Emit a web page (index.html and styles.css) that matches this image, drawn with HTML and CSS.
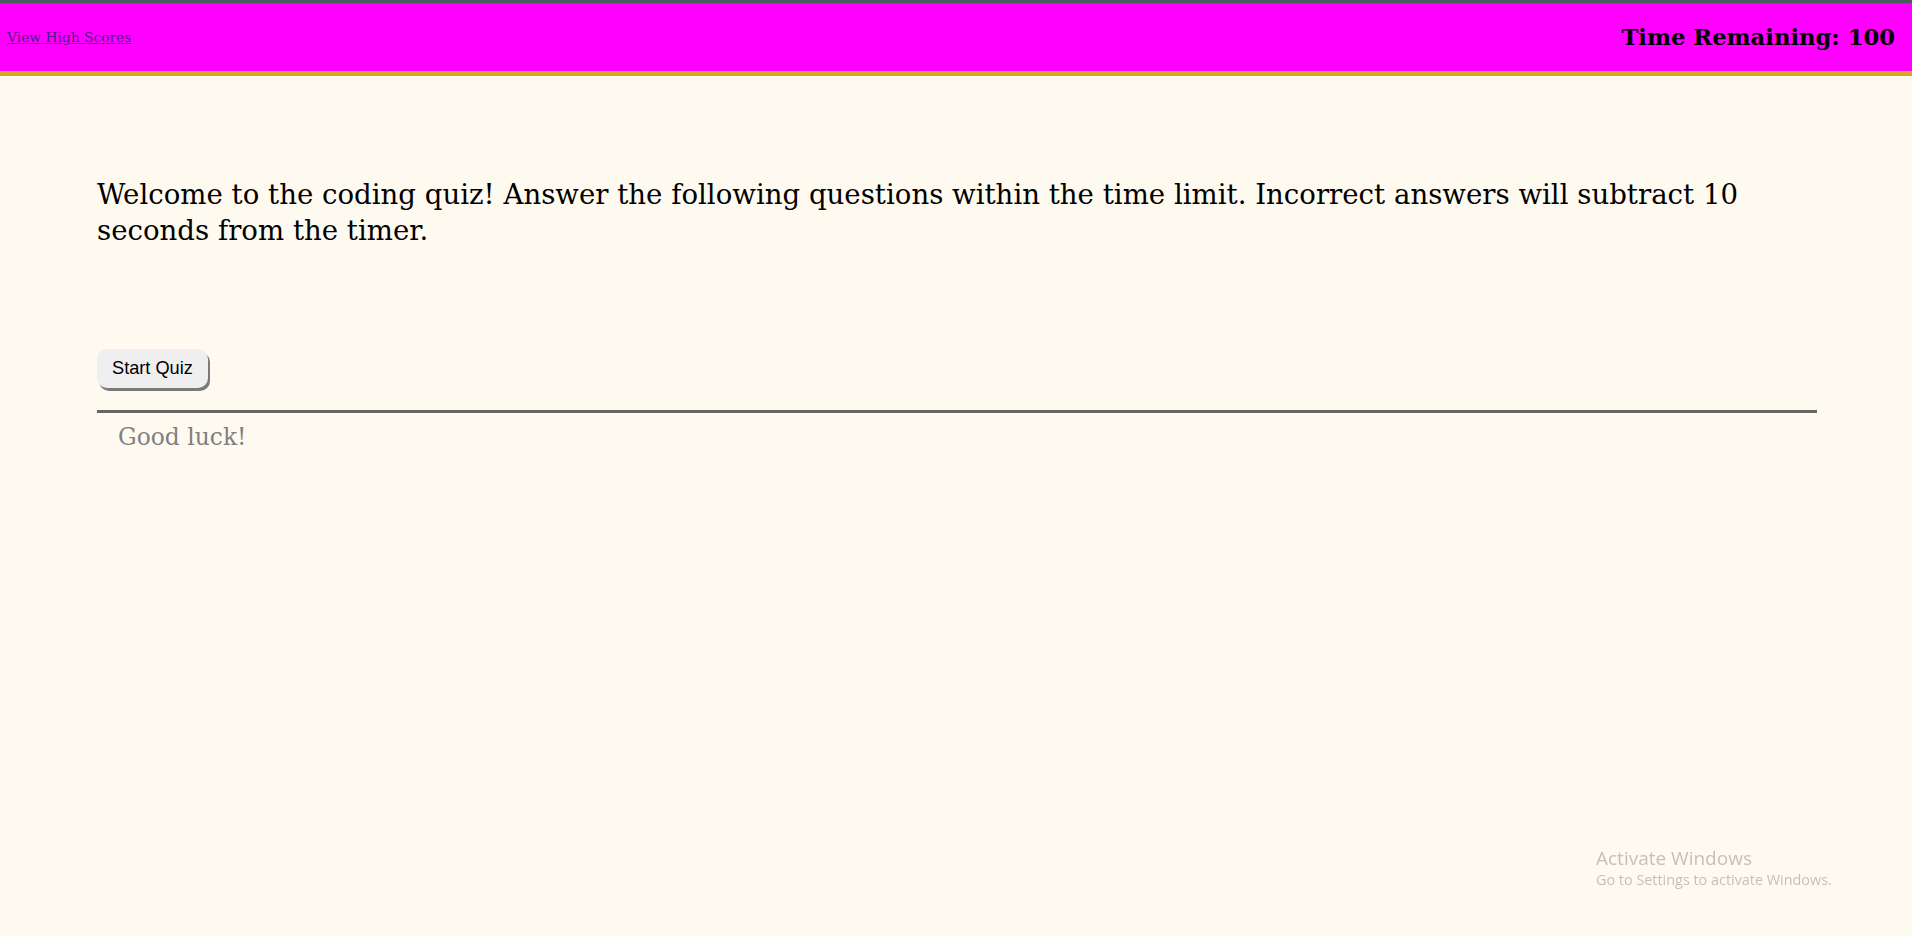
FILE: index.html
```html
<!DOCTYPE html>
<html lang="en">
<head>
<meta charset="utf-8">
<title>Coding Quiz</title>
<link rel="stylesheet" href="styles.css">
</head>
<body>
<header class="topbar">
  <a class="scores-link" href="#">View High Scores</a>
  <div class="timer">Time Remaining: 100</div>
</header>
<main class="quiz">
  <p class="intro">Welcome to the coding quiz! Answer the following questions within the time limit. Incorrect answers will subtract 10 seconds from the timer.</p>
  <div class="actions">
    <button class="start-btn" type="button">Start Quiz</button>
  </div>
  <hr class="divider">
  <p class="feedback">Good luck!</p>
</main>
<div class="watermark">
  <div class="wm-title">Activate Windows</div>
  <div class="wm-sub">Go to Settings to activate Windows.</div>
</div>
</body>
</html>
```
FILE: styles.css
```css
html, body {
  margin: 0;
  padding: 0;
}
body {
  background: #fffaf0;
  font-family: "DejaVu Serif", Georgia, serif;
  color: #000;
  min-height: 936px;
}
.topbar {
  display: flex;
  justify-content: space-between;
  align-items: center;
  height: 68px;
  background: #ff00ff;
  border-top: 3px solid #4b5a5c;
  border-bottom: 5px solid #daa520;
  padding: 0 17px 0 7px;
}
.scores-link {
  font-size: 13.8px;
  color: #551a8b;
  text-decoration: underline;
}
.timer {
  font-size: 22.7px;
  font-weight: bold;
}
.quiz {
  padding: 0 95px 0 97px;
}
.intro {
  margin: 101px 0 0 0;
  font-size: 27.6px;
  line-height: 36px;
}
.actions {
  display: flex;
  margin-top: 100px;
}
.start-btn {
  font-family: "Liberation Sans", Arial, sans-serif;
  font-size: 18.2px;
  color: #000;
  background: #efefef;
  border: none;
  border-radius: 10px;
  padding: 0 15px;
  height: 39px;
  box-shadow: 2px 3px 0 #7a7a7a;
}
.divider {
  margin: 22px 0 0 0;
  border: none;
  height: 3px;
  background: #666;
}
.feedback {
  margin: 10px 0 0 21px;
  font-size: 23.4px;
  color: #808080;
}
.watermark {
  position: fixed;
  left: 1596px;
  top: 846px;
  font-family: "Open Sans", "Noto Sans", sans-serif;
  color: #c4c1ba;
}
.wm-title {
  font-size: 19px;
  line-height: 24px;
}
.wm-sub {
  font-size: 14.4px;
  line-height: 20px;
}
```
